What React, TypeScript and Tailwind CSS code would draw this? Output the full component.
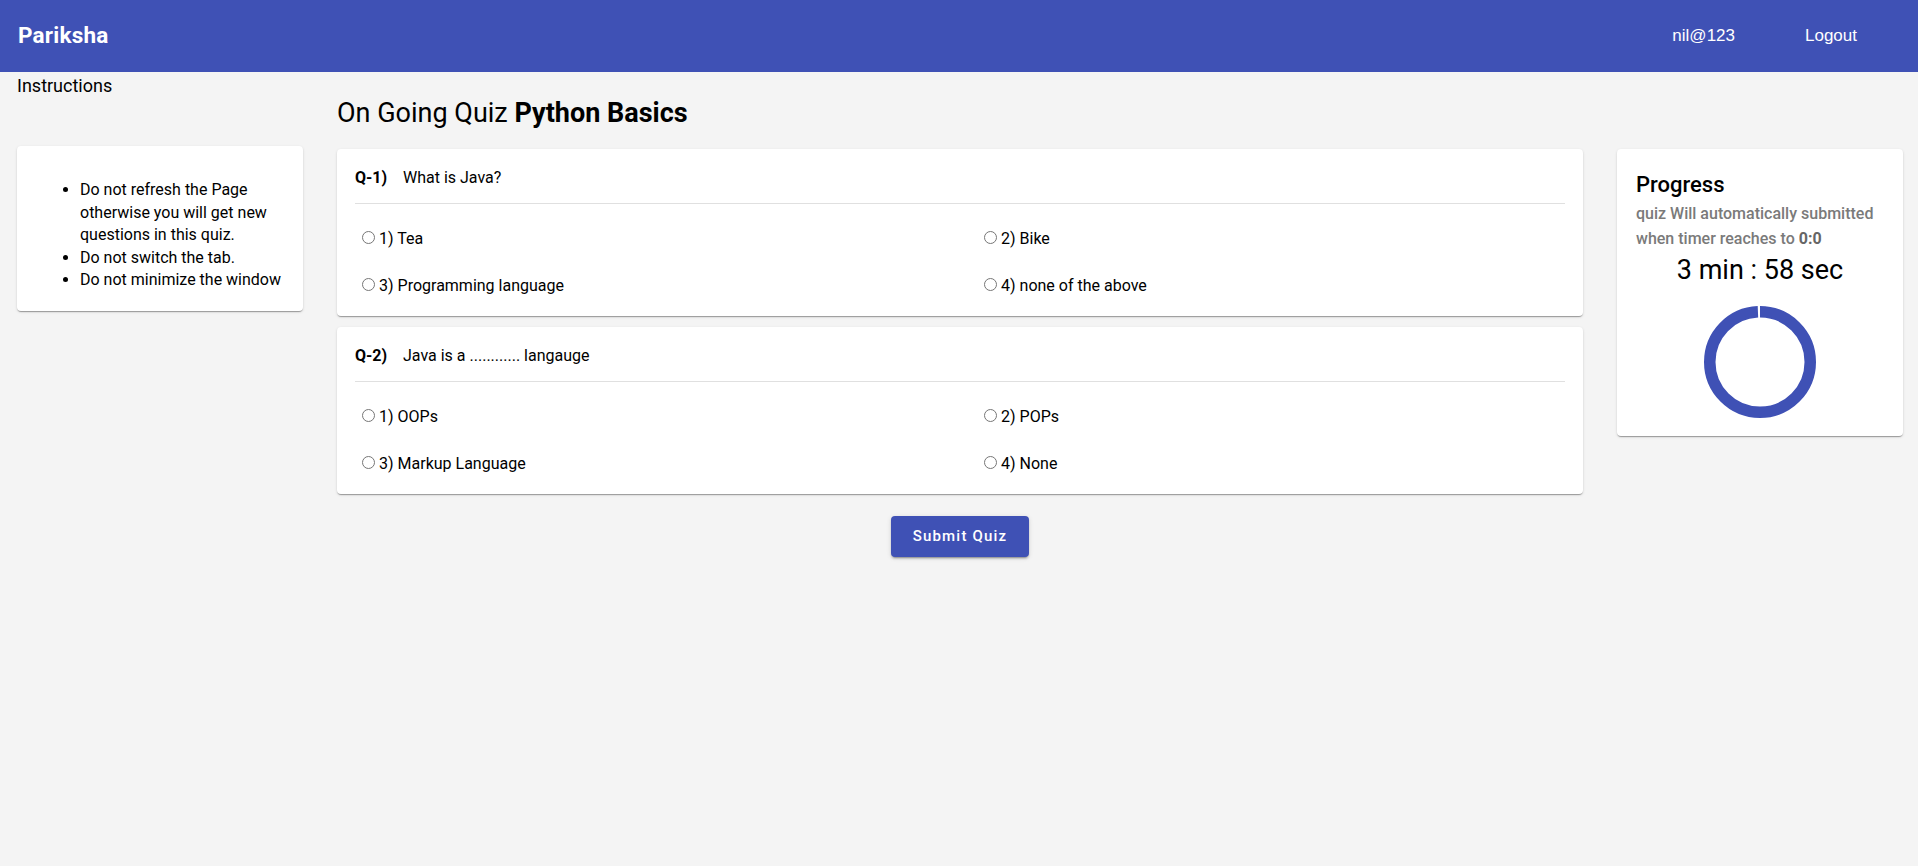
import React from "react";

const cardShadow =
  "shadow-[0px_2px_1px_-1px_rgba(0,0,0,0.2),0px_1px_1px_0px_rgba(0,0,0,0.14),0px_1px_3px_0px_rgba(0,0,0,0.12)]";

type Q = { no: number; text: string; options: string[] };

const questions: Q[] = [
  { no: 1, text: "What is Java?", options: ["Tea", "Bike", "Programming language", "none of the above"] },
  { no: 2, text: "Java is a ............ langauge", options: ["OOPs", "POPs", "Markup Language", "None"] },
];

function QuestionCard({ q }: { q: Q }) {
  return (
    <div className={`bg-white rounded-[4px] ${cardShadow} h-[167px] px-[18px] pt-[18px]`}>
      <div className="flex items-center h-[22px] text-[16px] leading-[22px] text-black">
        <span className="font-bold w-[48px]">Q-{q.no})</span>
        <span>{q.text}</span>
      </div>
      <div className="mt-[14px] border-t border-[#e0e0e0]" />
      <div className="grid grid-cols-[622px_1fr] mt-[11px]">
        {q.options.map((o, i) => (
          <label key={i} className="flex items-center h-[47px] text-[16px] text-black cursor-pointer">
            <input type="radio" name={`q${q.no}`} className="ml-[7px] mr-[3px] w-[13px] h-[13px] -mt-[2px]" />
            <span className="ml-[1px]">
              {i + 1}) {o}
            </span>
          </label>
        ))}
      </div>
    </div>
  );
}

export default function App() {
  const size = 112;
  const stroke = 11.5;
  const r = (size - stroke) / 2;
  const c = 2 * Math.PI * r;
  const value = 99.17;
  return (
    <div className="min-h-[866px] bg-[#f4f4f4] font-['Roboto',sans-serif] text-black">
      <header className="h-[72px] bg-[#3f51b5] flex items-center pl-[18px] pr-[61px] text-white">
        <div className="text-[22.5px] font-bold tracking-[0.2px]">Pariksha</div>
        <div className="ml-auto flex items-center gap-[70px] font-['Liberation_Sans',Arial,sans-serif] text-[17px]">
          <span>nil@123</span>
          <span>Logout</span>
        </div>
      </header>
      <div className="flex">
        <div className="w-[320px] shrink-0">
          <div className="pl-[17px] mt-[2px] text-[18px] leading-[24px]">Instructions</div>
          <div className={`mx-[17px] mt-[48px] bg-white rounded-[4px] ${cardShadow} pt-[33px] pb-[19px]`}>
            <ul className="list-disc pl-[63px] pr-[8px] text-[16px] leading-[22.5px]">
              <li>Do not refresh the Page otherwise you will get new questions in this quiz.</li>
              <li>Do not switch the tab.</li>
              <li>Do not minimize the window</li>
            </ul>
          </div>
        </div>
        <div className="w-[1278px] shrink-0 pl-[17px] pr-[15px]">
          <h1 className="mt-[25px] text-[27px] leading-[32px]">
            On Going Quiz <b className="font-bold">Python Basics</b>
          </h1>
          <div className="mt-[20px] flex flex-col gap-[11px]">
            {questions.map((q) => (
              <QuestionCard key={q.no} q={q} />
            ))}
          </div>
          <div className="flex justify-center mt-[22px]">
            <button className="w-[138px] h-[41px] rounded-[4px] bg-[#3f51b5] text-white text-[15px] font-medium tracking-[1.2px] shadow-[0px_3px_1px_-2px_rgba(0,0,0,0.2),0px_2px_2px_0px_rgba(0,0,0,0.14),0px_1px_5px_0px_rgba(0,0,0,0.12)]">
              Submit Quiz
            </button>
          </div>
        </div>
        <div className="w-[320px] shrink-0 pl-[19px] pr-[15px]">
          <div className={`mt-[77px] bg-white rounded-[4px] ${cardShadow} h-[287px] px-[19px] pt-[22px]`}>
            <div className="text-[22px] font-medium leading-[28px]">Progress</div>
            <div className="mt-[2px] text-[16px] font-medium leading-[25px] text-[#7a7a7a]">
              quiz Will automatically submitted when timer reaches to <b className="font-bold text-[#666]">0:0</b>
            </div>
            <div className="text-center text-[27px] leading-[32px] mt-[3px]">3 min : 58 sec</div>
            <div className="flex justify-center mt-[20px]">
              <svg width={size} height={size} viewBox={`0 0 ${size} ${size}`} className="-rotate-90">
                <circle
                  cx={size / 2}
                  cy={size / 2}
                  r={r}
                  fill="none"
                  stroke="#3f51b5"
                  strokeWidth={stroke}
                  strokeDasharray={`${(c * value) / 100} ${c}`}
                />
              </svg>
            </div>
          </div>
        </div>
      </div>
    </div>
  );
}
